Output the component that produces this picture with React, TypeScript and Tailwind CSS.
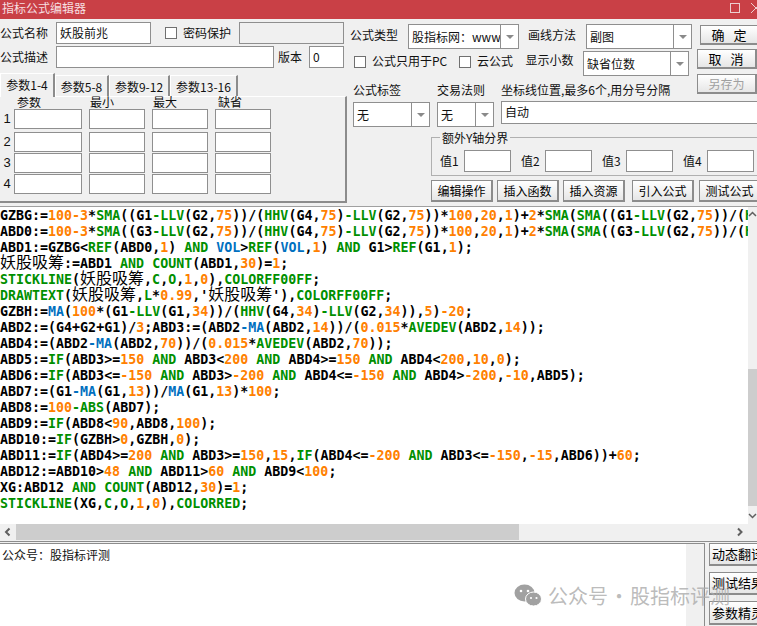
import React from 'react';

const CODE = [
  "GZBG:=100-3*SMA((G1-LLV(G2,75))/(HHV(G4,75)-LLV(G2,75))*100,20,1)+2*SMA(SMA((G1-LLV(G2,75))/(HHV(G4,75)-LLV(G2,75))*100,20,1),15,1);",
  "ABD0:=100-3*SMA((G3-LLV(G2,75))/(HHV(G4,75)-LLV(G2,75))*100,20,1)+2*SMA(SMA((G3-LLV(G2,75))/(HHV(G4,75)-LLV(G2,75))*100,20,1),15,1);",
  "ABD1:=GZBG<REF(ABD0,1) AND VOL>REF(VOL,1) AND G1>REF(G1,1);",
  "妖股吸筹:=ABD1 AND COUNT(ABD1,30)=1;",
  "STICKLINE(妖股吸筹,C,O,1,0),COLORFF00FF;",
  "DRAWTEXT(妖股吸筹,L*0.99,'妖股吸筹'),COLORFF00FF;",
  "GZBH:=MA(100*(G1-LLV(G1,34))/(HHV(G4,34)-LLV(G2,34)),5)-20;",
  "ABD2:=(G4+G2+G1)/3;ABD3:=(ABD2-MA(ABD2,14))/(0.015*AVEDEV(ABD2,14));",
  "ABD4:=(ABD2-MA(ABD2,70))/(0.015*AVEDEV(ABD2,70));",
  "ABD5:=IF(ABD3>=150 AND ABD3<200 AND ABD4>=150 AND ABD4<200,10,0);",
  "ABD6:=IF(ABD3<=-150 AND ABD3>-200 AND ABD4<=-150 AND ABD4>-200,-10,ABD5);",
  "ABD7:=(G1-MA(G1,13))/MA(G1,13)*100;",
  "ABD8:=100-ABS(ABD7);",
  "ABD9:=IF(ABD8<90,ABD8,100);",
  "ABD10:=IF(GZBH>0,GZBH,0);",
  "ABD11:=IF(ABD4>=200 AND ABD3>=150,15,IF(ABD4<=-200 AND ABD3<=-150,-15,ABD6))+60;",
  "ABD12:=ABD10>48 AND ABD11>60 AND ABD9<100;",
  "XG:ABD12 AND COUNT(ABD12,30)=1;",
  "STICKLINE(XG,C,O,1,0),COLORRED;",
];

const GREEN = new Set(['SMA', 'LLV', 'HHV', 'REF', 'AND', 'COUNT', 'STICKLINE', 'DRAWTEXT', 'AVEDEV', 'IF', 'ABS', 'COLORFF00FF', 'COLORRED', 'C', 'O', 'L']);
const BLUE = new Set(['MA', 'VOL']);

function tokenColor(tok: string) {
  const word = tok.replace(/^-/, '');
  if (/^[0-9.]+$/.test(word)) return 'text-[#ff8000]';
  if (GREEN.has(word)) return 'text-[#008f00]';
  if (BLUE.has(word)) return 'text-[#0070c0]';
  return 'text-black';
}

function CodeLine({ text }: { text: string }) {
  const parts = text.match(/-?[A-Za-z][A-Za-z0-9]*|-?[0-9.]+|[\u4e00-\u9fff]+|./g) ?? [];
  return (
    <div className="h-4 leading-4 whitespace-pre">
      {parts.map((p, i) =>
        /[\u4e00-\u9fff]/.test(p) ? (
          <span key={i} className="font-normal text-[16px] leading-[0] text-black [font-family:'Noto_Sans_CJK_SC',sans-serif]">
            {p}
          </span>
        ) : (
          <span key={i} className={tokenColor(p)}>
            {p}
          </span>
        ),
      )}
    </div>
  );
}

function Field({ className = '', value = '', gray = false }: { className?: string; value?: string; gray?: boolean }) {
  return (
    <div className={`border border-[#8f8f8f] pl-[3px] leading-[19px] shrink-0 overflow-hidden whitespace-nowrap ${gray ? 'bg-[#f0f0f0]' : 'bg-white'} ${className}`}>
      {value}
    </div>
  );
}

function Check() {
  return <div className="w-3 h-3 shrink-0 bg-white border border-[#707070]" />;
}

function Combo({ value, className = '' }: { value: string; className?: string }) {
  return (
    <div className={`flex border border-[#8f8f8f] bg-white shrink-0 ${className}`}>
      <div className="flex-1 min-w-0 overflow-hidden whitespace-nowrap pl-[3px] flex items-center">{value}</div>
      <div className="border-l border-[#8f8f8f] flex items-center justify-center w-[18px]">
        <div className="w-0 h-0 border-x-[4px] border-x-transparent border-t-[4px] border-t-[#8a8a8a]" />
      </div>
    </div>
  );
}

function Btn({ label, className = '', disabled = false }: { label: string; className?: string; disabled?: boolean }) {
  return (
    <div
      className={`shrink-0 flex items-center justify-center whitespace-pre overflow-hidden border border-[#8c8c8c] border-b-2 border-r-2 bg-gradient-to-b from-white to-[#e6e6e6] ${disabled ? 'text-[#a0a0a0]' : 'text-black'} ${className}`}
    >
      {label}
    </div>
  );
}

function Tab({ label, active = false, className = '' }: { label: string; active?: boolean; className?: string }) {
  return (
    <div
      className={`flex items-center justify-center border-t border-l border-white border-r-2 border-r-[#8c8c8c] ${active ? 'h-6 pb-[2px] bg-[#f0f0f0] relative z-10' : 'h-[22px] mt-[2px] bg-[#f0f0f0]'} ${className}`}
    >
      {label}
    </div>
  );
}

const PARAM_ROWS = ['1', '2', '3', '4'];

export default function App() {
  return (
    <div className="w-[757px] h-[626px] overflow-hidden relative bg-[#f0f0f0] flex flex-col text-[12px] text-[#111] [font-family:'Noto_Sans_CJK_SC','Liberation_Sans',sans-serif]">
      {/* title bar */}
      <div className="h-[19px] shrink-0 bg-[#c94046] text-[#f6dfe0] flex items-center">
        <span className="pl-[2px] pb-[3px]">指标公式编辑器</span>
        <div className="ml-auto mr-[-7px] mb-[4px] flex items-center gap-[10px]">
          <div className="w-[10px] h-[10px] border border-[#eccfd0]" />
          <svg width="14" height="12" viewBox="0 0 14 12" className="text-[#eccfd0]">
            <path d="M1 1 L11 11 M11 1 L1 11" stroke="currentColor" strokeWidth="1" />
          </svg>
        </div>
      </div>

      {/* formula form */}
      <div className="h-[187px] shrink-0 flex">
        <div className="w-[347px] shrink-0 flex flex-col">
          <div className="h-[22px] mt-[3px] flex items-center">
            <span className="w-[56px] shrink-0">公式名称</span>
            <Field className="w-[95px] h-[22px]" value="妖股前兆" />
            <div className="ml-[14px] mr-[6px]"><Check /></div>
            <span className="w-[56px]">密码保护</span>
            <Field className="w-[105px] h-[22px]" gray />
          </div>
          <div className="h-[22px] mt-[2px] flex items-center">
            <span className="w-[56px] shrink-0">公式描述</span>
            <Field className="w-[218px] h-[22px]" />
            <span className="ml-[4px] w-[31px]">版本</span>
            <Field className="w-[35px] h-[22px]" value="0" />
          </div>
          <div className="flex h-6 mt-[5px]">
            <Tab label="参数1-4" active className="w-[55px]" />
            <Tab label="参数5-8" className="w-[54px]" />
            <Tab label="参数9-12" className="w-[61px]" />
            <Tab label="参数13-16" className="w-[68px]" />
          </div>
          <div className="h-[107px] mt-[-1px] w-[347px] border-t border-t-white border-r-2 border-b-2 border-[#8c8c8c] pl-[14px]">
            <div className="flex h-3 leading-[10px]">
              <span className="w-[75px] pl-[3px]">参数</span>
              <span className="w-[63px] pl-px">最小</span>
              <span className="w-[63px] pl-px">最大</span>
              <span className="pl-[3px]">缺省</span>
            </div>
            <div className="flex flex-col gap-px">
              {PARAM_ROWS.map((n, i) => (
                <div key={n} className={`flex h-[20px] -ml-[14px] ${i === 0 ? 'mb-[2px]' : ''}`}>
                  <span className="w-[14px] text-center text-[13px] leading-[20px] [font-family:'Liberation_Sans',sans-serif]">{n}</span>
                  <Field className="w-[68px] h-[20px]" />
                  <Field className="ml-[7px] w-[56px] h-[20px]" />
                  <Field className="ml-[7px] w-[56px] h-[20px]" />
                  <Field className="ml-[7px] w-[56px] h-[20px]" />
                </div>
              ))}
            </div>
          </div>
        </div>

        <div className="flex-1 min-w-0 pl-[3px] flex flex-col">
          <div className="flex items-start mt-[5px] h-[24px]">
            <span className="w-[58px] shrink-0 leading-[22px]">公式类型</span>
            <Combo value="股指标网：www" className="w-[111px] h-[25px]" />
            <span className="ml-[9px] w-[58px] shrink-0 leading-[22px]">画线方法</span>
            <Combo value="副图" className="w-[106px] h-[25px]" />
            <Btn label="确  定" className="ml-[8px] mt-px w-[60px] h-[20px] text-[13px] tracking-[1px]" />
          </div>
          <div className="flex items-start h-[26px] mt-px">
            <div className="ml-[4px] mt-[7px] mr-[6px]"><Check /></div>
            <span className="w-[88px] leading-[24px]">公式只用于PC</span>
            <div className="mt-[7px] mr-[6px]"><Check /></div>
            <span className="w-[49px] leading-[24px]">云公式</span>
            <span className="w-[58px] leading-[22px]">显示小数</span>
            <Combo value="缺省位数" className="w-[106px] h-[25px] mt-[2px]" />
            <div className="ml-[8px] flex flex-col gap-[5px] relative z-10">
              <Btn label="取  消" className="w-[60px] h-[20px] text-[13px] tracking-[1px]" />
              <Btn label="另存为" disabled className="w-[60px] h-[20px]" />
            </div>
          </div>
          <div className="flex mt-[5px]">
            <div className="w-[87px] pl-[3px] shrink-0">
              <div className="leading-[20px]">公式标签</div>
              <Combo value="无" className="w-[77px] h-[25px] mt-[2px]" />
            </div>
            <div className="w-[64px] shrink-0">
              <div className="leading-[20px]">交易法则</div>
              <Combo value="无" className="w-[57px] h-[25px] mt-[2px]" />
            </div>
            <div className="flex-1 min-w-0">
              <div className="leading-[20px] whitespace-nowrap">坐标线位置,最多6个,用分号分隔</div>
              <Field className="w-[270px] h-[23px] mt-px" value="自动" />
            </div>
          </div>
          <fieldset className="border border-[#b0b0b0] ml-[81px] h-[45px] mt-[4px] w-[340px] pl-2">
            <legend className="px-[2px] leading-[13px]">额外Y轴分界</legend>
            <div className="flex items-center mt-[6px]">
              {['值1', '值2', '值3', '值4'].map((v) => (
                <div key={v} className="flex items-center w-[81px]">
                  <span className="w-[24px]">{v}</span>
                  <Field className="w-[47px] h-[22px]" />
                </div>
              ))}
            </div>
          </fieldset>
          <div className="flex ml-[81px] mt-[4px] gap-1 h-[22px]">
            <Btn label="编辑操作" className="w-[62px]" />
            <Btn label="插入函数" className="w-[62px]" />
            <Btn label="插入资源" className="w-[62px]" />
            <Btn label="引入公式" className="w-[62px] ml-[3px]" />
            <Btn label="测试公式" className="w-[62px] ml-px" />
          </div>
        </div>
      </div>

      {/* code editor */}
      <div className="h-px shrink-0 bg-[#a0a0a0]" />
      <div className="h-[333px] shrink-0 flex flex-col bg-white">
        <div className="flex-1 min-h-0 flex">
          <div className="flex-1 min-w-0 overflow-hidden pt-[1px] font-bold text-[13.3px] [font-family:'DejaVu_Sans_Mono','Noto_Sans_CJK_SC',monospace]">
            {CODE.map((line, i) => (
              <CodeLine key={i} text={line} />
            ))}
          </div>
          <div className="w-[9px] shrink-0 bg-[#f0f0f0] flex flex-col items-center">
            <svg width="9" height="16" viewBox="0 0 9 16" className="shrink-0">
              <path d="M1 9 L4.5 5.5 L8 9" stroke="#606060" strokeWidth="1.5" fill="none" />
            </svg>
            <div className="h-[146px] w-full" />
            <div className="h-[137px] w-full bg-[#cdcdcd]" />
            <svg width="9" height="16" viewBox="0 0 9 16" className="shrink-0 mt-auto">
              <path d="M1 6 L4.5 9.5 L8 6" stroke="#606060" strokeWidth="1.5" fill="none" />
            </svg>
          </div>
        </div>
        <div className="h-[16px] shrink-0 bg-[#f0f0f0] flex items-center">
          <svg width="16" height="16" viewBox="0 0 16 16" className="shrink-0">
            <path d="M9.5 4.5 L6 8 L9.5 11.5" stroke="#606060" strokeWidth="2" fill="none" />
          </svg>
          <div className="w-[503px] h-full bg-[#cdcdcd]" />
          <svg width="16" height="16" viewBox="0 0 16 16" className="ml-[213px] shrink-0">
            <path d="M6 4.5 L9.5 8 L6 11.5" stroke="#606060" strokeWidth="2" fill="none" />
          </svg>
        </div>
      </div>

      {/* message pane */}
      <div className="h-px shrink-0 mt-px bg-[#8c8c8c]" />
      <div className="flex-1 min-h-0 flex">
        <div className="w-[705px] shrink-0 mt-px border-t border-r border-[#8c8c8c] flex">
          <div className="w-[686px] shrink-0 bg-white pl-[2px] pt-[1px] leading-[20px]">公众号：股指标评测</div>
          <div className="flex-1 bg-[#f0f0f0]" />
        </div>
        <div className="flex-1 min-w-0 pl-[4px] pt-[1px] flex flex-col gap-[6px]">
          <Btn label="动态翻译" className="w-[60px] h-[23px] justify-start pl-[2px] text-[13px]" />
          <Btn label="测试结果" className="w-[60px] h-[23px] justify-start pl-[2px] text-[13px]" />
          <Btn label="参数精灵" className="w-[60px] h-[24px] justify-start pl-[2px] text-[13px]" />
        </div>
      </div>

      {/* watermark */}
      <div className="absolute left-[514px] top-[584px] flex items-center gap-[6px] text-[#aaa]/80 text-[20px] leading-[24px] whitespace-nowrap pointer-events-none">
        <svg width="28" height="24" viewBox="0 0 28 24" className="opacity-80">
          <ellipse cx="10.5" cy="9" rx="10" ry="8.5" fill="#8a8a8a" />
          <ellipse cx="19.5" cy="15" rx="8" ry="7" fill="#8a8a8a" stroke="#fff" strokeWidth="1" />
          <circle cx="7" cy="7" r="1.3" fill="#fff" />
          <circle cx="14" cy="7" r="1.3" fill="#fff" />
          <circle cx="17" cy="14" r="1.1" fill="#fff" />
          <circle cx="22.5" cy="14" r="1.1" fill="#fff" />
        </svg>
        <div className="flex">
          <span>公众号</span>
          <span className="w-[22px] text-center">·</span>
          <span>股指标评测</span>
        </div>
      </div>
    </div>
  );
}
